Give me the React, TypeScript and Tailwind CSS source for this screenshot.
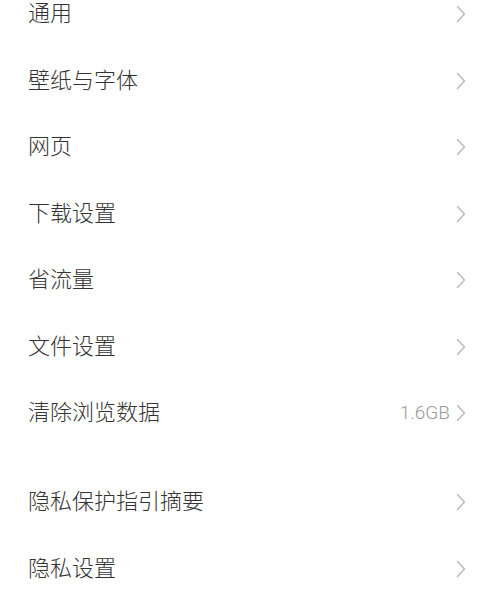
const groups: { label: string; value?: string }[][] = [
  [
    { label: "通用" },
    { label: "壁纸与字体" },
    { label: "网页" },
    { label: "下载设置" },
    { label: "省流量" },
    { label: "文件设置" },
    { label: "清除浏览数据", value: "1.6GB" },
  ],
  [{ label: "隐私保护指引摘要" }, { label: "隐私设置" }],
];

function Chevron() {
  return (
    <svg width="12" height="18" viewBox="0 0 12 18" fill="none" className="shrink-0">
      <path d="M2.5 1.5 L9.5 9 L2.5 16.5" stroke="#b8b8b8" strokeWidth="1.4" strokeLinecap="round" strokeLinejoin="round" />
    </svg>
  );
}

export default function App() {
  return (
    <div
      className="h-[600px] w-[500px] overflow-hidden bg-white"
      style={{ fontFamily: '"Noto Sans CJK SC", "Noto Sans", sans-serif' }}
    >
      <div className="-mt-[19px] flex flex-col gap-[22.5px]">
        {groups.map((items, gi) => (
          <ul key={gi} className="flex flex-col">
            {items.map((item) => (
              <li key={item.label} className="flex h-[66.5px] items-center justify-between pl-[28px] pr-[33px]">
                <span className="pb-[6px] text-[22px] font-light leading-none text-[#333333]">{item.label}</span>
                <div className="flex items-center gap-[5px]">
                  {item.value && (
                    <span
                      className="pb-[2px] text-[19px] font-light leading-none text-[#9a9a9a]"
                      style={{ fontFamily: 'Roboto, "Noto Sans", sans-serif' }}
                    >
                      {item.value}
                    </span>
                  )}
                  <Chevron />
                </div>
              </li>
            ))}
          </ul>
        ))}
      </div>
    </div>
  );
}
